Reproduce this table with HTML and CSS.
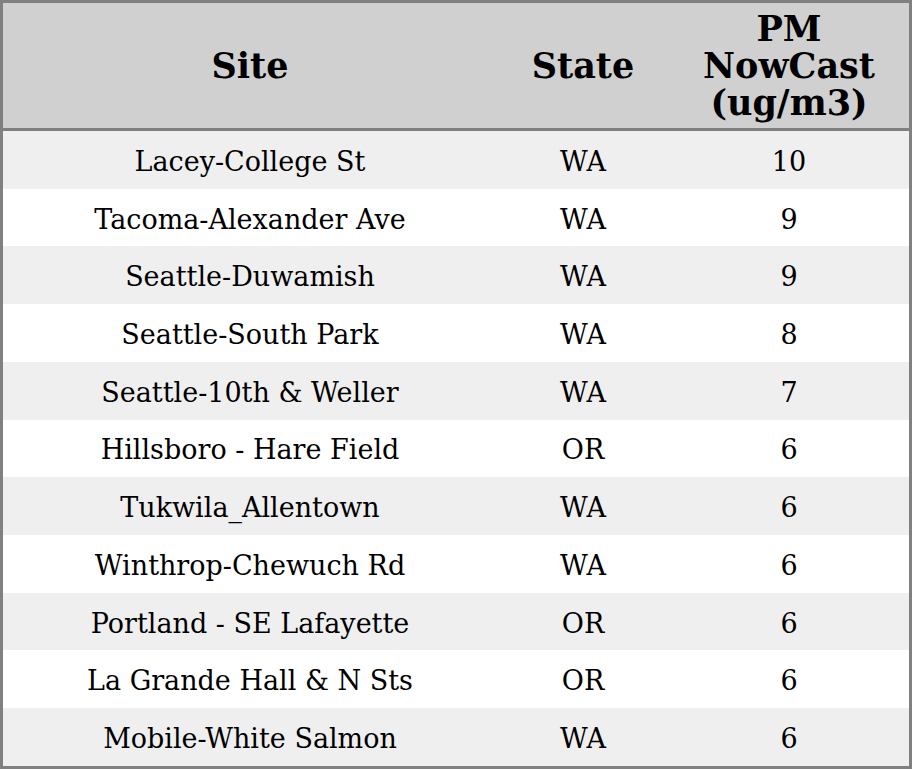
FILE: index.html
```html
<!DOCTYPE html>
<html>
<head>
<meta charset="utf-8">
<link rel="stylesheet" href="styles.css">
</head>
<body>
<table class="aq-table">
  <thead>
    <tr>
      <th class="col-site">Site</th>
      <th class="col-state">State</th>
      <th class="col-pm">PM<br>NowCast<br>(ug/m3)</th>
    </tr>
  </thead>
  <tbody>
    <tr><td>Lacey-College St</td><td>WA</td><td>10</td></tr>
    <tr><td>Tacoma-Alexander Ave</td><td>WA</td><td>9</td></tr>
    <tr><td>Seattle-Duwamish</td><td>WA</td><td>9</td></tr>
    <tr><td>Seattle-South Park</td><td>WA</td><td>8</td></tr>
    <tr><td>Seattle-10th &amp; Weller</td><td>WA</td><td>7</td></tr>
    <tr><td>Hillsboro - Hare Field</td><td>OR</td><td>6</td></tr>
    <tr><td>Tukwila_Allentown</td><td>WA</td><td>6</td></tr>
    <tr><td>Winthrop-Chewuch Rd</td><td>WA</td><td>6</td></tr>
    <tr><td>Portland - SE Lafayette</td><td>OR</td><td>6</td></tr>
    <tr><td>La Grande Hall &amp; N Sts</td><td>OR</td><td>6</td></tr>
    <tr><td>Mobile-White Salmon</td><td>WA</td><td>6</td></tr>
  </tbody>
</table>
</body>
</html>
```
FILE: styles.css
```css
html, body {
  margin: 0;
  padding: 0;
  background: #ffffff;
}
.aq-table {
  width: 912px;
  height: 769px;
  border-collapse: separate;
  border-spacing: 0;
  border: 3px solid #808080;
  box-sizing: border-box;
  font-family: "DejaVu Serif", serif;
  color: #000;
  table-layout: fixed;
}
.aq-table th {
  background: #d0d0d0;
  font-weight: bold;
  font-size: 35px;
  line-height: 37px;
  height: 128px;
  padding: 0;
  border-bottom: 3px solid #808080;
  text-align: center;
  vertical-align: middle;
  box-sizing: border-box;
}
.col-site { width: 494px; }
.col-state { width: 172px; }
.col-pm { width: 240px; }
.aq-table td {
  font-size: 27px;
  line-height: 30px;
  padding: 4px 0 0 0;
  height: 57.7px;
  box-sizing: border-box;
  text-align: center;
  vertical-align: middle;
}
.aq-table tbody tr:nth-child(odd) td {
  background: #efefef;
}
.aq-table tbody tr:nth-child(even) td {
  background: #ffffff;
}
```
